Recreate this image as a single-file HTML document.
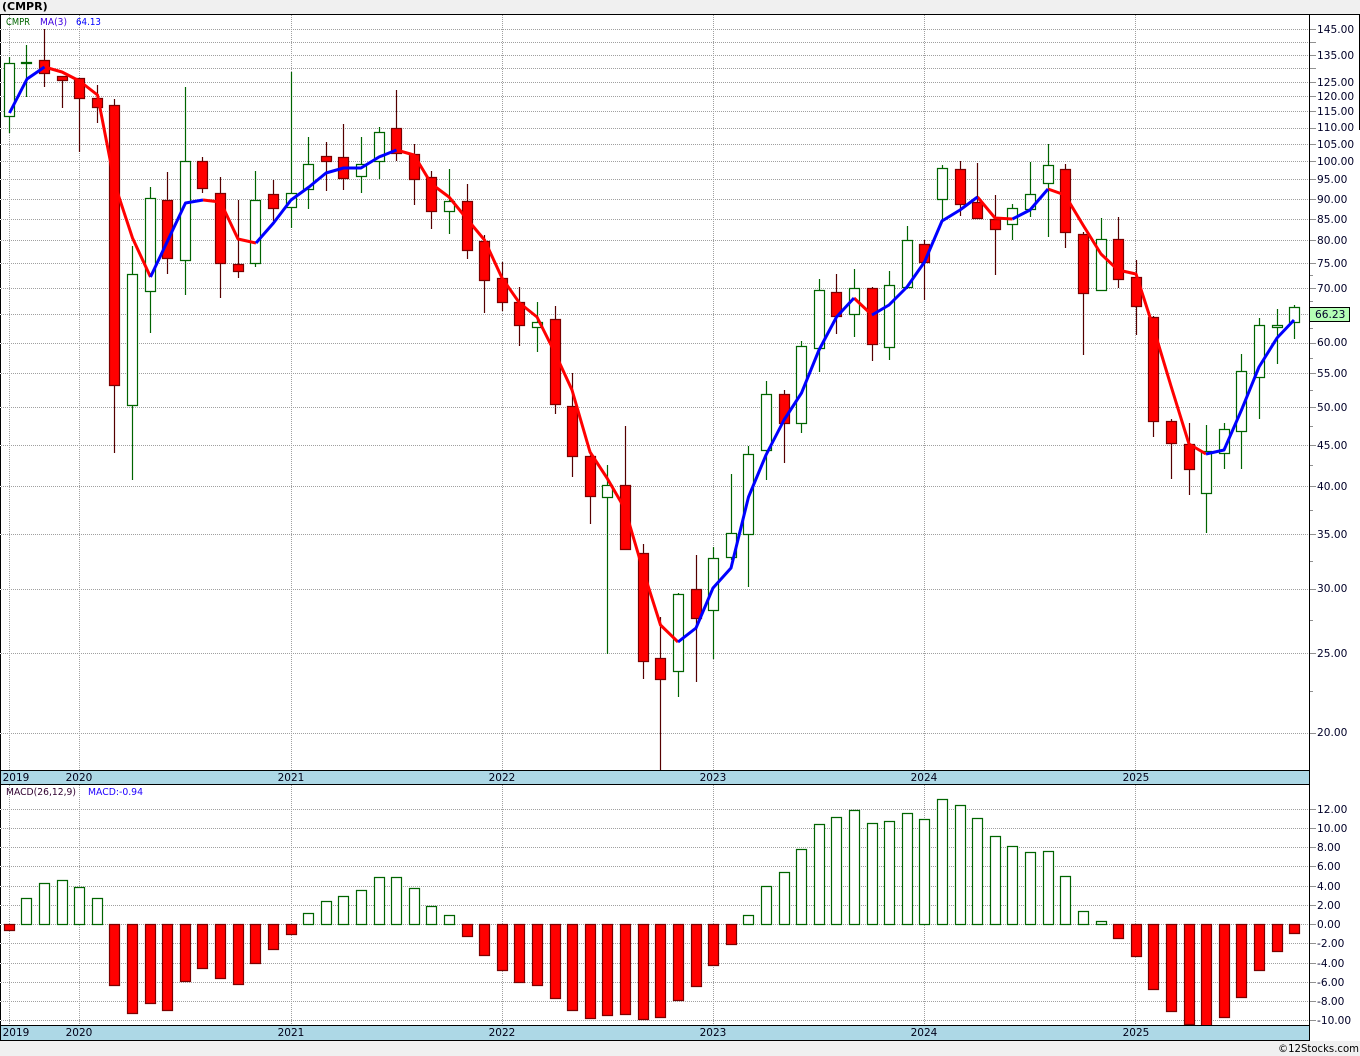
<!DOCTYPE html>
<html lang="en">
<head>
<meta charset="utf-8">
<title>CMPR</title>
<style>
html,body{margin:0;padding:0;background:#f0f0f0;width:1360px;height:1056px;overflow:hidden}
svg{display:block}
text{font-family:"DejaVu Sans","Liberation Sans",sans-serif}
.a{font-size:10.6px;fill:#000028}
.y{font-size:10.5px;fill:#000018;text-anchor:middle}
.s{font-size:10px}
</style>
</head>
<body>
<svg width="1360" height="1056" viewBox="0 0 1360 1056" xmlns="http://www.w3.org/2000/svg">
<rect x="0" y="14" width="1360" height="1027" fill="#fff"/>

<!-- horizontal grid -->
<path fill="none" stroke="#a0a0a0" stroke-dasharray="1 1" d="M1 29.5H1309M1 42.5H1309M1 55.5H1309M1 68.5H1309M1 82.5H1309M1 96.5H1309M1 111.5H1309M1 128.5H1309M1 144.5H1309M1 161.5H1309M1 179.5H1309M1 199.5H1309M1 219.5H1309M1 240.5H1309M1 263.5H1309M1 288.5H1309M1 314.5H1309M1 343.5H1309M1 373.5H1309M1 407.5H1309M1 445.5H1309M1 486.5H1309M1 534.5H1309M1 589.5H1309M1 653.5H1309M1 733.5H1309M1 809.5H1309M1 828.5H1309M1 847.5H1309M1 866.5H1309M1 886.5H1309M1 905.5H1309M1 924.5H1309M1 943.5H1309M1 963.5H1309M1 982.5H1309M1 1001.5H1309M1 1020.5H1309"/>
<!-- vertical grid -->
<path fill="none" stroke="#a0a0a0" stroke-dasharray="1 1" d="M9.5 15V770M79.5 15V770M291.5 15V770M502.5 15V770M713.5 15V770M924.5 15V770M1135.5 15V770M9.5 785V1025M79.5 785V1025M291.5 785V1025M502.5 785V1025M713.5 785V1025M924.5 785V1025M1135.5 785V1025"/>

<!-- wicks -->
<path fill="none" stroke="#006400" stroke-width="1.2" d="M9.5 57V133M26.5 45V97M132.5 246V480M150.5 187V333M185.5 87V295M255.5 171V267M291.5 72V228M308.5 137V209M361.5 137V193M379.5 127V179M449.5 169V234M537.5 302V352M607.5 465V654M678.5 593V697M713.5 547V659M731.5 474V560M748.5 446V587M766.5 381V480M801.5 341V433M819.5 279V372M854.5 269V337M889.5 271V360M907.5 226V289M942.5 165V220M1012.5 204V240M1030.5 162V217M1048.5 144V237M1101.5 218V291M1206.5 425V533M1224.5 423V469M1241.5 354V469M1259.5 318V419M1277.5 309V364M1294.5 305V339"/>
<path fill="none" stroke="#550000" stroke-width="1.2" d="M44.5 29V87M62.5 76V108M79.5 78V152M97.5 85V123M114.5 99V453M167.5 172V274M202.5 157V193M220.5 177V298M238.5 200V278M273.5 180V221M326.5 142V191M343.5 124V190M396.5 90V161M414.5 144V205M431.5 171V229M467.5 184V259M484.5 235V313M502.5 262V311M519.5 287V346M555.5 306V414M572.5 373V477M590.5 450V524M625.5 426V549M643.5 544V679M660.5 617V770M696.5 555V682M784.5 390V463M836.5 274V334M872.5 287V361M924.5 240V300M960.5 161V216M977.5 163V218M995.5 195V275M1065.5 164V248M1083.5 232V355M1118.5 217V288M1136.5 260V335M1153.5 316V437M1171.5 419V479M1189.5 423V495"/>

<!-- green bodies -->
<path fill="#fff" stroke="#006400" stroke-width="1.2" d="M4.5 63.5h10V116.5h-10zM21.5 62.5h10V63.5h-10zM127.5 274.5h10V405.5h-10zM145.5 198.5h10V291.5h-10zM180.5 161.5h10V260.5h-10zM250.5 200.5h10V263.5h-10zM286.5 193.5h10V207.5h-10zM303.5 164.5h10V189.5h-10zM356.5 164.5h10V176.5h-10zM374.5 132.5h10V161.5h-10zM444.5 201.5h10V211.5h-10zM532.5 322.5h10V327.5h-10zM602.5 485.5h10V497.5h-10zM673.5 594.5h10V671.5h-10zM708.5 558.5h10V610.5h-10zM726.5 533.5h10V557.5h-10zM743.5 454.5h10V534.5h-10zM761.5 394.5h10V450.5h-10zM796.5 346.5h10V423.5h-10zM814.5 290.5h10V348.5h-10zM849.5 288.5h10V314.5h-10zM884.5 285.5h10V347.5h-10zM902.5 240.5h10V287.5h-10zM937.5 168.5h10V199.5h-10zM1007.5 208.5h10V224.5h-10zM1025.5 194.5h10V209.5h-10zM1043.5 165.5h10V183.5h-10zM1096.5 239.5h10V290.5h-10zM1201.5 451.5h10V493.5h-10zM1219.5 429.5h10V453.5h-10zM1236.5 371.5h10V431.5h-10zM1254.5 325.5h10V377.5h-10zM1272.5 325.5h10V327.5h-10zM1289.5 307.5h10V322.5h-10z"/>
<!-- red bodies -->
<path fill="#ff0000" stroke="#7a0000" stroke-width="1.2" d="M39.5 60.5h10V73.5h-10zM57.5 76.5h10V80.5h-10zM74.5 78.5h10V98.5h-10zM92.5 98.5h10V107.5h-10zM109.5 105.5h10V385.5h-10zM162.5 200.5h10V258.5h-10zM197.5 161.5h10V188.5h-10zM215.5 193.5h10V263.5h-10zM233.5 264.5h10V271.5h-10zM268.5 194.5h10V208.5h-10zM321.5 156.5h10V161.5h-10zM338.5 157.5h10V178.5h-10zM391.5 128.5h10V153.5h-10zM409.5 154.5h10V179.5h-10zM426.5 177.5h10V211.5h-10zM462.5 201.5h10V250.5h-10zM479.5 241.5h10V280.5h-10zM497.5 278.5h10V302.5h-10zM514.5 302.5h10V325.5h-10zM550.5 319.5h10V404.5h-10zM567.5 406.5h10V456.5h-10zM585.5 456.5h10V496.5h-10zM620.5 485.5h10V549.5h-10zM638.5 553.5h10V661.5h-10zM655.5 658.5h10V679.5h-10zM691.5 589.5h10V618.5h-10zM779.5 394.5h10V423.5h-10zM831.5 292.5h10V316.5h-10zM867.5 288.5h10V344.5h-10zM919.5 244.5h10V262.5h-10zM955.5 169.5h10V204.5h-10zM972.5 202.5h10V218.5h-10zM990.5 219.5h10V229.5h-10zM1060.5 169.5h10V232.5h-10zM1078.5 234.5h10V293.5h-10zM1113.5 239.5h10V279.5h-10zM1131.5 277.5h10V306.5h-10zM1148.5 317.5h10V421.5h-10zM1166.5 421.5h10V443.5h-10zM1184.5 444.5h10V469.5h-10z"/>

<!-- MA(3) -->
<g fill="none" stroke-width="3" stroke-linejoin="round" stroke-linecap="butt">
<path stroke="#ff0000" d="M44.5 67L62 72 79.5 81 97.5 95 115 185 132.5 238 150.5 277"/>
<path stroke="#ff0000" d="M203 200L220.5 202 238 239 256 243"/>
<path stroke="#ff0000" d="M396.5 150L414 155 431.5 184 449 197 467 219 484.5 240 502 278 519.5 303 537 317 555 353 572 390 590 452 607 478 625 509 643 570 660.5 625 678 642"/>
<path stroke="#ff0000" d="M854 298L872 315"/>
<path stroke="#ff0000" d="M977.5 197L995 218 1012.5 219"/>
<path stroke="#ff0000" d="M1048 189L1065 195 1083 225 1101 254 1118 270 1136 274 1153.5 328 1171 386 1189 444 1206 454"/>
<path stroke="#0000ff" d="M9.5 113L27 79 44.5 67"/>
<path stroke="#0000ff" d="M150.5 277L168 240 185.5 203 203 200"/>
<path stroke="#0000ff" d="M256 243L273.5 223 291 200 309 187 326 173 343.5 168 361 168 379 157 396.5 150"/>
<path stroke="#0000ff" d="M678 642L696 628 713 588 731 568 748.5 497 766 455 784 420 801.5 393 819 350 836.5 317 854 298"/>
<path stroke="#0000ff" d="M872 315L889 305 907 287 924.5 262 942 221 960 210 977.5 197"/>
<path stroke="#0000ff" d="M1012.5 219L1030 210 1048 189"/>
<path stroke="#0000ff" d="M1206 454L1224 450 1241.5 410 1259 367 1277 338 1294 320"/>
</g>

<!-- MACD bars -->
<path fill="#fff" stroke="#006400" stroke-width="1.2" d="M21.5 898.5h10V924.5h-10zM39.5 883.5h10V924.5h-10zM57.5 880.5h10V924.5h-10zM74.5 887.5h10V924.5h-10zM92.5 898.5h10V924.5h-10zM303.5 913.5h10V924.5h-10zM321.5 901.5h10V924.5h-10zM338.5 896.5h10V924.5h-10zM356.5 890.5h10V924.5h-10zM374.5 877.5h10V924.5h-10zM391.5 877.5h10V924.5h-10zM409.5 888.5h10V924.5h-10zM426.5 906.5h10V924.5h-10zM444.5 915.5h10V924.5h-10zM743.5 915.5h10V924.5h-10zM761.5 886.5h10V924.5h-10zM779.5 872.5h10V924.5h-10zM796.5 849.5h10V924.5h-10zM814.5 824.5h10V924.5h-10zM831.5 817.5h10V924.5h-10zM849.5 810.5h10V924.5h-10zM867.5 823.5h10V924.5h-10zM884.5 821.5h10V924.5h-10zM902.5 813.5h10V924.5h-10zM919.5 819.5h10V924.5h-10zM937.5 799.5h10V924.5h-10zM955.5 805.5h10V924.5h-10zM972.5 818.5h10V924.5h-10zM990.5 836.5h10V924.5h-10zM1007.5 846.5h10V924.5h-10zM1025.5 852.5h10V924.5h-10zM1043.5 851.5h10V924.5h-10zM1060.5 876.5h10V924.5h-10zM1078.5 911.5h10V924.5h-10zM1096.5 921.5h10V924.5h-10z"/>
<path fill="#ff0000" stroke="#7a0000" stroke-width="1.2" d="M4.5 924.5h10V930.5h-10zM109.5 924.5h10V985.5h-10zM127.5 924.5h10V1013.5h-10zM145.5 924.5h10V1003.5h-10zM162.5 924.5h10V1010.5h-10zM180.5 924.5h10V981.5h-10zM197.5 924.5h10V968.5h-10zM215.5 924.5h10V978.5h-10zM233.5 924.5h10V984.5h-10zM250.5 924.5h10V963.5h-10zM268.5 924.5h10V949.5h-10zM286.5 924.5h10V934.5h-10zM462.5 924.5h10V936.5h-10zM479.5 924.5h10V955.5h-10zM497.5 924.5h10V970.5h-10zM514.5 924.5h10V982.5h-10zM532.5 924.5h10V985.5h-10zM550.5 924.5h10V998.5h-10zM567.5 924.5h10V1010.5h-10zM585.5 924.5h10V1018.5h-10zM602.5 924.5h10V1015.5h-10zM620.5 924.5h10V1014.5h-10zM638.5 924.5h10V1019.5h-10zM655.5 924.5h10V1017.5h-10zM673.5 924.5h10V1000.5h-10zM691.5 924.5h10V986.5h-10zM708.5 924.5h10V965.5h-10zM726.5 924.5h10V944.5h-10zM1113.5 924.5h10V938.5h-10zM1131.5 924.5h10V956.5h-10zM1148.5 924.5h10V989.5h-10zM1166.5 924.5h10V1011.5h-10zM1184.5 924.5h10V1024.5h-10zM1201.5 924.5h10V1026.5h-10zM1219.5 924.5h10V1017.5h-10zM1236.5 924.5h10V997.5h-10zM1254.5 924.5h10V970.5h-10zM1272.5 924.5h10V951.5h-10zM1289.5 924.5h10V933.5h-10z"/>

<!-- date bars -->
<rect x="0" y="771" width="1309" height="13" fill="#add8e6"/>
<rect x="0" y="1026" width="1309" height="14" fill="#add8e6"/>
<path fill="none" stroke="#000" d="M0 770.5H1310M0 784.5H1310M0 1025.5H1310M0 1040.5H1310"/>

<!-- frame -->
<path fill="none" stroke="#000" d="M0 14.5H1360M1309.5 14V1041M1359.5 14V130"/>
<rect x="0" y="14" width="1" height="1027" fill="#000"/>
<path fill="none" stroke="#fff" d="M0 29.5h1M0 42.5h1M0 55.5h1M0 68.5h1M0 82.5h1M0 96.5h1M0 111.5h1M0 128.5h1M0 144.5h1M0 161.5h1M0 179.5h1M0 199.5h1M0 219.5h1M0 240.5h1M0 263.5h1M0 288.5h1M0 314.5h1M0 343.5h1M0 373.5h1M0 407.5h1M0 445.5h1M0 486.5h1M0 534.5h1M0 589.5h1M0 653.5h1M0 733.5h1M0 809.5h1M0 828.5h1M0 847.5h1M0 866.5h1M0 886.5h1M0 905.5h1M0 924.5h1M0 943.5h1M0 963.5h1M0 982.5h1M0 1001.5h1M0 1020.5h1"/>

<!-- axis ticks -->
<path fill="none" stroke="#909090" d="M1310 29.5h6M1310 42.5h6M1310 55.5h6M1310 68.5h6M1310 82.5h6M1310 96.5h6M1310 111.5h6M1310 128.5h6M1310 144.5h6M1310 161.5h6M1310 179.5h6M1310 199.5h6M1310 219.5h6M1310 240.5h6M1310 263.5h6M1310 288.5h6M1310 343.5h6M1310 373.5h6M1310 407.5h6M1310 445.5h6M1310 486.5h6M1310 534.5h6M1310 589.5h6M1310 653.5h6M1310 733.5h6M1310 275.5h3M1310 301.5h3M1310 328.5h3M1310 358.5h3M1310 390.5h3M1310 426.5h3M1310 465.5h3M1310 510.5h3M1310 561.5h3M1310 620.5h3M1310 691.5h3M1310 809.5h6M1310 828.5h6M1310 847.5h6M1310 866.5h6M1310 886.5h6M1310 905.5h6M1310 924.5h6M1310 943.5h6M1310 963.5h6M1310 982.5h6M1310 1001.5h6M1310 1020.5h6"/>

<!-- price labels -->
<text class="a" x="1317" y="33">145.00</text>
<text class="a" x="1317" y="59">135.00</text>
<text class="a" x="1317" y="86">125.00</text>
<text class="a" x="1317" y="100">120.00</text>
<text class="a" x="1317" y="115">115.00</text>
<text class="a" x="1317" y="131">110.00</text>
<text class="a" x="1317" y="148">105.00</text>
<text class="a" x="1317" y="165">100.00</text>
<text class="a" x="1317" y="183">95.00</text>
<text class="a" x="1317" y="203">90.00</text>
<text class="a" x="1317" y="223">85.00</text>
<text class="a" x="1317" y="244">80.00</text>
<text class="a" x="1317" y="267">75.00</text>
<text class="a" x="1317" y="292">70.00</text>
<text class="a" x="1317" y="346">60.00</text>
<text class="a" x="1317" y="377">55.00</text>
<text class="a" x="1317" y="411">50.00</text>
<text class="a" x="1317" y="449">45.00</text>
<text class="a" x="1317" y="490">40.00</text>
<text class="a" x="1317" y="538">35.00</text>
<text class="a" x="1317" y="592">30.00</text>
<text class="a" x="1317" y="657">25.00</text>
<text class="a" x="1317" y="736">20.00</text>

<rect x="1309.5" y="307.5" width="40" height="14" fill="#b4ffb4" stroke="#000"/>
<text class="a" x="1315" y="318">66.23</text>

<!-- MACD labels -->
<text class="a" x="1317" y="813">12.00</text>
<text class="a" x="1317" y="832">10.00</text>
<text class="a" x="1317" y="851">8.00</text>
<text class="a" x="1317" y="870">6.00</text>
<text class="a" x="1317" y="890">4.00</text>
<text class="a" x="1317" y="909">2.00</text>
<text class="a" x="1317" y="928">0.00</text>
<text class="a" x="1317" y="947">-2.00</text>
<text class="a" x="1317" y="967">-4.00</text>
<text class="a" x="1317" y="986">-6.00</text>
<text class="a" x="1317" y="1005">-8.00</text>
<text class="a" x="1317" y="1024">-10.00</text>

<!-- years -->
<text class="y" x="16" y="781">2019</text>
<text class="y" x="79" y="781">2020</text>
<text class="y" x="291" y="781">2021</text>
<text class="y" x="502" y="781">2022</text>
<text class="y" x="713" y="781">2023</text>
<text class="y" x="924" y="781">2024</text>
<text class="y" x="1136" y="781">2025</text>
<text class="y" x="16" y="1036">2019</text>
<text class="y" x="79" y="1036">2020</text>
<text class="y" x="291" y="1036">2021</text>
<text class="y" x="502" y="1036">2022</text>
<text class="y" x="713" y="1036">2023</text>
<text class="y" x="924" y="1036">2024</text>
<text class="y" x="1136" y="1036">2025</text>

<!-- headers -->
<text x="2" y="10" font-size="11" font-weight="700" fill="#000">(CMPR)</text>
<text class="s" x="6" y="25" fill="#006400" textLength="24" lengthAdjust="spacingAndGlyphs">CMPR</text>
<text class="s" x="40" y="25" fill="#4000e0" textLength="27" lengthAdjust="spacingAndGlyphs">MA(3)</text>
<text class="s" x="76" y="25" fill="#0000ff" textLength="25" lengthAdjust="spacingAndGlyphs">64.13</text>
<text class="s" x="6" y="795" fill="#300030" textLength="70" lengthAdjust="spacingAndGlyphs">MACD(26,12,9)</text>
<text class="s" x="88" y="795" fill="#2000ff" textLength="55" lengthAdjust="spacingAndGlyphs">MACD:-0.94</text>
<text x="1278" y="1052" font-size="10.4" fill="#000" textLength="81" lengthAdjust="spacingAndGlyphs">©12Stocks.com</text>
</svg>
</body>
</html>
